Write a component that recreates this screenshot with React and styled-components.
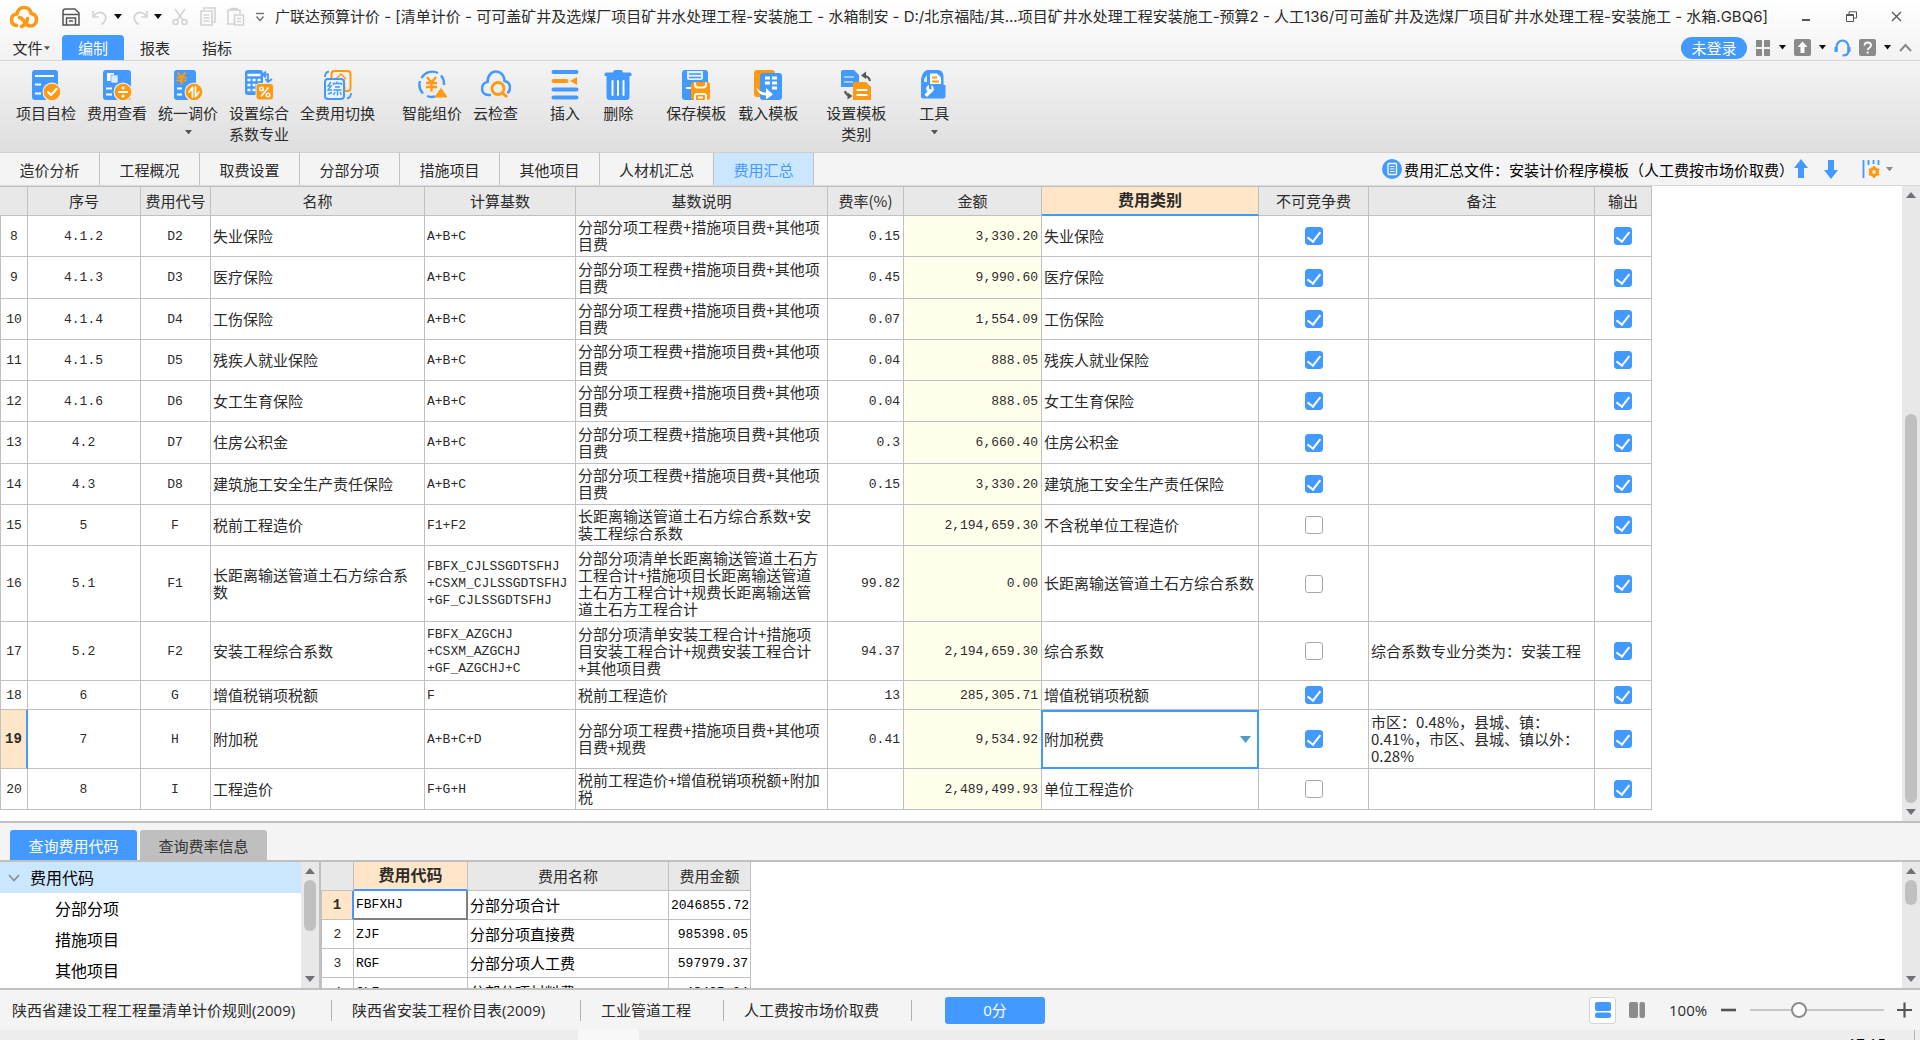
import React, { useState } from 'react';
import styled, { createGlobalStyle, css } from 'styled-components';

const BLUE = '#4299ff';
const ORANGE = '#ff9912';
const LINE = '#c0c0c0';
const SANS = '"Open Sans", "Noto Sans CJK SC", sans-serif';
const TITLE = 'Inter, "Noto Sans CJK SC", sans-serif';
const CJK = '"Noto Sans CJK SC", sans-serif';
const MONO = '"Liberation Mono", "Noto Sans CJK SC", monospace';

const GlobalStyle = createGlobalStyle`
  * { box-sizing: border-box; }
  body { margin: 0; }
  button, input, select { font: inherit; color: inherit; margin: 0; }
  button { padding: 0; border: 0; background: none; cursor: pointer; }
`;

const Window = styled.div`
  display: flex;
  flex-direction: column;
  height: 100vh;
  overflow: hidden;
  background: #f4f4f4;
  color: #2b2b2b;
  font: 15px/21px ${CJK};
`;

/* ---------- title and menu ---------- */

const WindowHead = styled.header`
  flex: none;
  background: linear-gradient(#ffffff, #f2f2f2);
`;

const TitleBar = styled.div`
  display: flex;
  align-items: center;
  height: 35px;
  padding: 0 14px 2px 8px;
`;

const QuickTools = styled.div`
  display: flex;
  align-items: center;
  margin-left: 22px;
`;

const QuickButton = styled.button`
  display: flex;
  align-items: center;
  justify-content: center;
  width: ${(p) => p.$width || 28}px;
  height: 24px;
  margin-left: ${(p) => p.$before || 0}px;
`;

const WindowTitle = styled.h1`
  flex: 1;
  min-width: 0;
  margin: 0 0 0 5px;
  overflow: hidden;
  white-space: nowrap;
  font: 400 15px/21px ${TITLE};
`;

const WindowButtons = styled.div`
  display: flex;
  gap: 25px;
  margin-left: 20px;
`;

const WindowButton = styled.button`
  display: flex;
  align-items: center;
  justify-content: center;
  width: 20px;
  height: 20px;
`;

const MenuBar = styled.div`
  display: flex;
  align-items: stretch;
  height: 26px;
  border-bottom: 1px solid #d6d6d6;
`;

const MenuItem = styled.button`
  display: flex;
  align-items: center;
  justify-content: center;
  gap: 1px;
  width: 62px;
  border-radius: 4px 4px 0 0;
  ${(p) => p.$active && css`background: ${BLUE}; color: #fff;`}
`;

const MenuTools = styled.div`
  display: flex;
  align-items: center;
  gap: 8px;
  margin-left: auto;
  padding-right: 8px;
`;

const LoginButton = styled.button`
  width: 66px;
  height: 22px;
  border-radius: 11px;
  background: ${BLUE};
  color: #fff;
  line-height: 21px;
`;

const MenuTool = styled.button`
  display: flex;
  align-items: center;
  gap: 8px;
  height: 20px;
`;

/* ---------- ribbon ---------- */

const Ribbon = styled.div`
  flex: none;
  display: flex;
  height: 92px;
  padding: 9px 16px 0;
  background: linear-gradient(#f4f4f4, #dedede);
  border-bottom: 1px solid #cfcfcf;
`;

const RibbonGroup = styled.div`
  display: flex;
  align-items: flex-start;
  gap: ${(p) => p.$gap || 11}px;
  margin-right: ${(p) => p.$after || 32}px;
`;

const RibbonButton = styled.button`
  display: flex;
  flex-direction: column;
  align-items: center;
  line-height: 21px;
  white-space: pre-line;
  svg:first-child { margin-bottom: 2px; }
`;

const CaretSlot = styled.span`
  display: flex;
  align-items: center;
  height: 20px;
`;

/* ---------- page tabs ---------- */

const PageTabs = styled.nav`
  flex: none;
  display: flex;
  align-items: stretch;
  height: 33px;
  border-bottom: 1px solid #d8d8d8;
  background: #f4f4f4;
`;

const PageTab = styled.button`
  min-width: 100px;
  padding: 0 19px;
  border-right: 1px solid ${LINE};
  ${(p) => p.$active && css`background: #cbe6ff; color: ${BLUE};`}
`;

const TemplateInfo = styled.div`
  display: flex;
  align-items: center;
  margin-left: auto;
  padding-right: 27px;
  color: #000;
`;

const TemplateName = styled.span`
  margin: 0 0 0 2px;
`;

const InfoButton = styled.button`
  display: flex;
  align-items: center;
  gap: 6px;
  margin-left: ${(p) => p.$before || 0}px;
`;

/* ---------- tables ---------- */

const SheetArea = styled.main`
  flex: 1;
  display: flex;
  min-height: 0;
  background: #fff;
  border-bottom: 2px solid ${LINE};
`;

const SheetView = styled.div`
  flex: 1;
  min-width: 0;
  overflow: hidden;
`;

const Sheet = styled.table`
  table-layout: fixed;
  border-collapse: separate;
  border-spacing: 0;
  width: ${(p) => p.$width}px;
`;

const Col = styled.col`
  width: ${(p) => p.$width}px;
`;

const HeadCell = styled.th`
  height: ${(p) => (p.$low ? 29 : 30)}px;
  padding: 0 0 2px;
  border-top: ${(p) => (p.$low ? 0 : 1)}px solid ${LINE};
  border-right: 1px solid ${LINE};
  border-bottom: 1px solid ${LINE};
  background: #e8e8e8;
  font-weight: 400;
  white-space: nowrap;
  ${(p) => p.$selected && css`
    background: #ffe6c8;
    border-bottom: 2px solid ${BLUE};
    font-size: 16px;
    font-weight: 700;
  `}
`;

const Row = styled.tr`
  height: ${(p) => p.$height}px;
`;

const Cell = styled.td`
  padding: 0 3px 2px 2px;
  border-right: 1px solid ${LINE};
  border-bottom: 1px solid ${LINE};
  text-align: ${(p) => p.$align || 'left'};
  line-height: 17px;
  white-space: pre-line;
  ${(p) => p.$code && css`padding-bottom: 0; font-family: ${MONO}; font-size: 13px;`}
  ${(p) => p.$money && css`background: #ffffeb;`}
  ${(p) => p.$tight && css`padding-left: 2px; padding-right: 2px; color: #000;`}
  ${(p) => p.$tick && css`padding: 0;`}
  ${(p) => p.$focused && css`
    border: 2px solid #808080;
    border-top-width: 0;
    border-left-width: 0;
  `}
`;

const IndexCell = styled.th`
  padding: 0;
  border-right: 1px solid ${LINE};
  border-bottom: 1px solid ${LINE};
  border-left: 1px solid ${LINE};
  font: 400 13px/17px ${MONO};
  ${(p) => p.$selected && css`
    background: #ffe6c8;
    border-right: 2px solid ${BLUE};
    font-weight: 700;
    font-size: 14px;
  `}
`;

const SelectCell = styled.td`
  padding: 0;
`;

const SelectWrap = styled.div`
  display: grid;
  grid-template: 1fr / 1fr;
  align-items: center;
  height: 59px;
  border: 2px solid ${BLUE};
  margin-left: -1px;
  svg {
    grid-area: 1 / 1;
    justify-self: end;
    margin-right: 6px;
    pointer-events: none;
  }
`;

const CategorySelect = styled.select`
  grid-area: 1 / 1;
  appearance: none;
  width: 100%;
  height: 100%;
  padding: 0 1px 2px;
  border: 0;
  outline: 0;
  background: #fff;
`;

const Check = styled.input`
  appearance: none;
  display: block;
  width: 18px;
  height: 18px;
  margin: 0 auto;
  border: 1px solid #a8a8a8;
  border-radius: 3px;
  background: #fff;
  &:checked {
    border-color: ${BLUE};
    background: ${BLUE};
  }
  &:checked::after {
    content: '';
    display: block;
    width: 6px;
    height: 11px;
    margin: 1px auto 0;
    border: solid #fff;
    border-width: 0 2px 2px 0;
    transform: rotate(38deg);
  }
`;

/* ---------- scroll bars ---------- */

const Track = styled.div`
  flex: none;
  display: flex;
  flex-direction: column;
  align-items: center;
  width: 18px;
  background: #e8e8e8;
`;

const TrackEnd = styled.button`
  display: flex;
  align-items: center;
  justify-content: center;
  width: 100%;
  height: 18px;
`;

const TrackSpace = styled.div`
  flex: ${(p) => p.$part} 1 0;
`;

const Thumb = styled.div`
  flex: ${(p) => p.$part} 1 0;
  width: 12px;
  border-radius: 6px;
  background: ${LINE};
`;

/* ---------- lower panel ---------- */

const PanelTabs = styled.div`
  flex: none;
  display: flex;
  align-items: flex-end;
  gap: 3px;
  height: 39px;
  padding-left: 10px;
  border-bottom: 2px solid ${LINE};
`;

const PanelTab = styled.button`
  width: 127px;
  height: 30px;
  border-radius: 3px 3px 0 0;
  background: ${(p) => (p.$active ? BLUE : '#bfbfbf')};
  color: ${(p) => (p.$active ? '#fff' : '#333')};
`;

const Panel = styled.section`
  flex: none;
  display: flex;
  height: 128px;
  border-bottom: 2px solid ${LINE};
  background: #fff;
`;

const Tree = styled.ul`
  width: 301px;
  margin: 0;
  padding: 0;
  list-style: none;
  color: #000;
  font-size: 16px;
`;

const TreeItem = styled.li`
  display: flex;
  align-items: center;
  gap: 10px;
  height: 31px;
  padding-left: ${(p) => (p.$child ? 55 : 8)}px;
  ${(p) => p.$selected && css`background: #cbe6ff;`}
`;

const PanelDivider = styled.div`
  width: 2px;
  background: ${LINE};
`;

/* ---------- status bar ---------- */

const StatusBar = styled.footer`
  flex: none;
  display: flex;
  align-items: center;
  height: 40px;
  padding: 0 6px 0 12px;
  font-family: ${SANS};
`;

const StatusText = styled.span`
  width: ${(p) => p.$width}px;
  margin-right: 20px;
  border-right: 1px solid #a9b2bb;
  white-space: nowrap;
`;

const ScoreButton = styled.button`
  width: 100px;
  height: 27px;
  margin-left: 13px;
  border-radius: 3px;
  background: ${BLUE};
  color: #fff;
`;

const ViewTools = styled.div`
  display: flex;
  align-items: center;
  margin-left: auto;
`;

const ViewButton = styled.button`
  display: flex;
  align-items: center;
  justify-content: center;
  width: 27px;
  height: 27px;
  margin-right: 7px;
  border: 1px solid ${(p) => (p.$active ? '#d4d4d4' : 'transparent')};
  border-radius: 3px;
  background: ${(p) => (p.$active ? '#fff' : 'transparent')};
`;

const ZoomText = styled.output`
  width: 41px;
  margin: 0 9px 0 12px;
`;

const ZoomButton = styled.button`
  display: flex;
  padding: 2px;
`;

const ZoomSlider = styled.input`
  appearance: none;
  width: 134px;
  height: 20px;
  margin: 0 11px 0 12px;
  background: transparent;
  &::-webkit-slider-runnable-track {
    height: 2px;
    background: #c6c6c6;
  }
  &::-webkit-slider-thumb {
    appearance: none;
    width: 16px;
    height: 16px;
    margin-top: -7px;
    border: 2px solid #8c8c8c;
    border-radius: 50%;
    background: #fff;
  }
`;

const TaskStrip = styled.div`
  flex: none;
  display: flex;
  height: 10px;
  overflow: hidden;
  background: #ededed;
`;

const TaskSlot = styled.div`
  width: 61px;
  margin-left: 578px;
  background: #f8f8f8;
`;

const Clock = styled.time`
  margin-left: auto;
  padding: 4px 28px 0 0;
  color: #000;
  font: 15px/18px ${SANS};
`;

const ClockEdge = styled.div`
  width: 1px;
  margin-right: 5px;
  background: #b4b4b4;
`;

/* ---------- icons ---------- */

const Caret = ({ size = 8, color = '#111' }) => (
  <svg width={size} height={size / 2 + 1} viewBox="0 0 8 5"><path d="M0 0h8L4 5z" fill={color} /></svg>
);

const Triangle = ({ up }) => (
  <svg width="10" height="6" viewBox="0 0 10 6"><path d={up ? 'M0 6h10L5 0z' : 'M0 0h10L5 6z'} fill="#6f6f76" /></svg>
);

const Logo = () => (
  <svg width="32" height="24" viewBox="0 0 32 24" fill="none" stroke={ORANGE} strokeWidth="3.6" strokeLinecap="round" strokeLinejoin="round">
    <path d="M8.500 20.500C5 20 3.500 17.500 3.500 14.500c0-3.500 2.500-5.500 5.500-5.500C9.500 5 12.500 2.500 16 2.500c4 0 6.500 2.500 7 6 3.500.5 5.500 3 5.500 6 0 4-2.800 6.500-6.300 6.500-5.200 0-6.200-8-10.700-8.500" />
    <path d="M13.500 21.500c3.500-1.500 5.500-4 6-8" />
  </svg>
);

const faint = { fill: 'none', stroke: '#d3d3d3', strokeWidth: 1.6 };
const SaveIcon = () => (
  <svg width="18" height="18" viewBox="0 0 18 18" fill="none" stroke="#555" strokeWidth="1.500">
    <path d="M1 3.500C1 2 2 1 3.500 1H13l4 4v12H1zM1 6.500h16M4.500 17v-7h9v7M7 13h4" />
  </svg>
);
const UndoIcon = () => (
  <svg width="16" height="18" viewBox="0 0 16 18" {...faint}><path d="M1 3v6h6M1.500 8.500C4 4.500 8 3.500 11 5.200c4 2.400 3.800 7.800-1.500 11.300" /></svg>
);
const RedoIcon = () => (
  <svg width="16" height="18" viewBox="0 0 16 18" {...faint}><path d="M15 3v6H9M14.500 8.500C12 4.500 8 3.500 5 5.200 1 7.600 1.200 13 6.500 16.500" /></svg>
);
const CutIcon = () => (
  <svg width="16" height="18" viewBox="0 0 16 18" {...faint}><circle cx="3.500" cy="14" r="2.500" /><circle cx="12.500" cy="14" r="2.500" /><path d="M5 12.200L13 1M11 12.200L3 1" /></svg>
);
const CopyIcon = () => (
  <svg width="16" height="19" viewBox="0 0 16 19" {...faint}><path d="M4 4V1h11v14h-3" /><path d="M1 4h11v14H1zM3.500 8h6M3.500 11h6M3.500 14h6" /></svg>
);
const PasteIcon = () => (
  <svg width="18" height="19" viewBox="0 0 18 19" {...faint}><path d="M7 17H1V3h12v4M4 4V1.500h6V4" /><path d="M7.500 8h9v10h-9zM10 11.500h4M10 14.500h4" /></svg>
);
const CustomizeIcon = () => (
  <svg width="10" height="10" viewBox="0 0 10 10"><path d="M1 1.500h8" stroke="#777" strokeWidth="1.500" /><path d="M1.500 4.500L5 8.500l3.500-4" fill="none" stroke="#777" strokeWidth="1.500" /></svg>
);

const check = { fill: 'none', stroke: '#fff', strokeWidth: 2.2, strokeLinecap: 'round', strokeLinejoin: 'round' };
const Art = ({ children }) => <svg width="30" height="30" viewBox="0 0 30 30">{children}</svg>;

const Badge = ({ children }) => (
  <>
    <circle cx="21" cy="22" r="9.500" fill="#ececec" />
    <circle cx="21" cy="22" r="8.300" fill={ORANGE} />
    {children}
  </>
);

const art = {
  selfCheck: (
    <Art>
      <rect x="1" width="26" height="30" rx="3" fill={BLUE} />
      <path d="M4 6h19M4 14.500h6M4 23.500h6" stroke="#fff" strokeWidth="2" />
      <Badge><path d="M17 22l3 3 5.500-6" {...check} /></Badge>
    </Art>
  ),
  feeView: (
    <Art>
      <rect x="1" width="28" height="30" rx="3" fill={BLUE} />
      <path d="M5 3h7v8H5z" fill="#fff" /><path d="M9 5h7v8H9z" fill="#dcebff" stroke={BLUE} strokeWidth=".6" />
      <path d="M4 18.500h6M4 24.500h6" stroke="#fff" strokeWidth="2" />
      <Badge>
        <path d="M16 22h10" stroke="#fff" strokeWidth="2" />
        <circle cx="21" cy="18" r="1.500" fill="#fff" /><circle cx="21" cy="26" r="1.500" fill="#fff" />
      </Badge>
    </Art>
  ),
  adjust: (
    <Art>
      <rect x="1" width="22" height="30" rx="3" fill={BLUE} />
      <path d="M4.500 2.500L8.500 7l4-4.500M3.500 7.500h10M3.500 10.500h10M8.500 7v7.500" fill="none" stroke={ORANGE} strokeWidth="2" />
      <path d="M4 18.500h5M4 24.500h5" stroke="#fff" strokeWidth="2" />
      <Badge><path d="M19.500 27V17.500L16 22M22.500 17v9.500L26 22" {...check} strokeWidth="1.800" /></Badge>
    </Art>
  ),
  coefficient: (
    <Art>
      <rect x="1" width="18" height="25" rx="3" fill={BLUE} />
      <path d="M3.500 5h13M3.500 10h3M8.500 10h3M13.500 10h3M3.500 15h3M8.500 15h3M3.500 20h3M8.500 20h3" stroke="#fff" strokeWidth="2.600" />
      <path d="M19.500 4.500h4.500v7M22 1.500l-3 3 3 3M21.500 9l2.500 3 4-3" fill="none" stroke={BLUE} strokeWidth="1.800" />
      <rect x="12" y="13.500" width="17.500" height="16.500" rx="3" fill={ORANGE} stroke="#e9e9e9" />
      <circle cx="17.500" cy="19" r="1.800" fill="none" stroke="#fff" strokeWidth="1.400" /><circle cx="24" cy="25" r="1.800" fill="none" stroke="#fff" strokeWidth="1.400" /><path d="M24.500 17.500l-7.500 9" stroke="#fff" strokeWidth="1.800" />
    </Art>
  ),
  swap: (
    <Art>
      <rect x="8.500" y="1" width="19" height="20" rx="3" fill="#f3f0ea" stroke={ORANGE} strokeWidth="2" />
      <path d="M13 9l5-5 5 5M14 10h8M18 10v6M14.500 14h8M13 18h10" fill="none" stroke={ORANGE} strokeWidth="1.500" />
      <rect x="2" y="9" width="19" height="20" rx="3" fill="#eaf3ff" stroke={BLUE} strokeWidth="2" />
      <path d="M8 12l-3 4h3l-3 4h4M5 24l4-1.500M14 11.500v2M10.500 15v-1.500h8V15M12 17h5M10.500 20h8M14.500 20v5.500M12 22l-1.500 3M17 22l1.500 3" fill="none" stroke={BLUE} strokeWidth="1.400" />
      <path d="M2 7c0-3 1-5 4-5.500M28 23c0 3-1 5-4 5.500" fill="none" stroke={BLUE} strokeWidth="1.800" />
    </Art>
  ),
  smart: (
    <Art>
      <path d="M18 26.500A12.500 12.500 0 0 1 10 26M6 23.500A13 13 0 0 1 3 11M4.500 8A12.500 12.500 0 0 1 21 3M24 5.500A13 13 0 0 1 27 15" fill="none" stroke={BLUE} strokeWidth="2.400" />
      <path d="M10 7l4.500 5.500L19 7M9 13h11M9 17h11M14.500 12v9.500" fill="none" stroke={ORANGE} strokeWidth="2.400" />
      <path d="M24 18.500L30 27H18z" fill={ORANGE} stroke={ORANGE} strokeLinejoin="round" />
    </Art>
  ),
  cloud: (
    <Art>
      <path d="M10 25H7.500C3.500 25 1 22 1 18.500c0-3.500 2.500-6 5.500-6.500C6.500 5.500 10.500 1.500 15 1.500s8.500 4 8.500 9.500c3.500.7 5.500 3.500 5.500 6.500 0 2.500-1 4.500-2.500 5.700" fill="none" stroke={BLUE} strokeWidth="2.600" />
      <circle cx="17" cy="18.500" r="6" fill="none" stroke={ORANGE} strokeWidth="2.800" />
      <path d="M21.500 23l4.500 4" stroke={ORANGE} strokeWidth="3" />
    </Art>
  ),
  insert: (
    <Art>
      <path d="M3.500 2h23M3.500 19.500h23M3.500 27.500h23" stroke={BLUE} strokeWidth="4" strokeLinecap="round" />
      <path d="M3.500 11h13" stroke={ORANGE} strokeWidth="4" strokeLinecap="round" /><path d="M20 11l7-4v8z" fill={ORANGE} />
    </Art>
  ),
  trash: (
    <Art>
      <path d="M10 2.500Q10 0 12 0h6q2 0 2 2.500h7q1.500 0 1.500 1.500v2h-27V4q0-1.500 1.500-1.500zM3.500 6h23V27q0 3-3 3h-17q-3 0-3-3z" fill={BLUE} />
      <path d="M9.500 11v14M15 11v14M20.500 11v14" stroke="#fff" strokeWidth="2" strokeLinecap="round" />
    </Art>
  ),
  saveTemplate: (
    <Art>
      <rect x="1" width="26" height="30" rx="3" fill={BLUE} />
      <path d="M6 1h16v7q0 2-2 2H8q-2 0-2-2z" fill="#e4f0ff" /><path d="M8 4h12M8 7.500h12" stroke={BLUE} strokeWidth="1.600" />
      <rect x="5" y="17" width="5" height="2" fill="#fff" />
      <rect x="10" y="12" width="19" height="18" rx="3" fill={ORANGE} />
      <path d="M14 12.500v2q0 3 3 3h5q3 0 3-3v-2M14 30v-4q0-2 2-2h7q2 0 2 2v4M17 27.500h5" fill="none" stroke="#fff" strokeWidth="2" />
    </Art>
  ),
  loadTemplate: (
    <Art>
      <rect x="1" width="21" height="27" rx="3" fill={ORANGE} />
      <rect x="7" y="3" width="22" height="27" rx="3" fill={BLUE} />
      <path d="M12 8h5M19 8h5M12 13h5M19 13h5M19 18h5" stroke="#fff" strokeWidth="3" />
      <path d="M3.500 17c2 4 5.500 5.500 9.500 5.500V18l7 6.500-7 5v-4C8 25.500 4 22.500 3.500 17z" fill="#fff" />
    </Art>
  ),
  templateKind: (
    <Art>
      <path d="M2 0h11l5 5v12H0V2q0-2 2-2z" fill={BLUE} /><path d="M3 7h10M3 12h9" stroke="#9fcbff" strokeWidth="2" />
      <path d="M14 12h11l5 5v13H12V14q0-2 2-2z" fill={ORANGE} /><path d="M15.500 20h11M15.500 25h11" stroke="#fff" strokeWidth="2" />
      <path d="M24 6c2.500.5 4.500 2 5 5M4 21c.3 2 1.500 3.500 3.500 4.500" fill="none" stroke="#555" strokeWidth="2" />
      <path d="M25 1.500L20 5.500l5 3.500zM6.500 22.500l5 3.500-5 3.500z" fill="#555" />
    </Art>
  ),
  tools: (
    <Art>
      <path d="M4 28.500q-2 0-2-2V12C2 5 5 0 9 0h10q5 0 5.500 6v9h2v11.500q0 2-2 2z" fill={BLUE} />
      <path d="M11 3.500h7l4 4V14H11z" fill="#fff" /><path d="M13 7.500h5M13 11.500h7" stroke={ORANGE} strokeWidth="2" />
      <path d="M5 12V9l3-4v7z" fill="#dcebff" />
      <path d="M10 15v4l2.500.5v-4.500c3 2 3 6 0 7.500L8 27 5.500 24.500l3-3C6 18.500 7.500 16 10 15z" fill="#fff" />
    </Art>
  ),
};

/* ---------- data ---------- */

const ribbon = [
  { after: 27, items: [['selfCheck', '项目自检'], ['feeView', '费用查看'], ['adjust', '统一调价', true], ['coefficient', '设置综合\n系数专业'], ['swap', '全费用切换']] },
  { after: 32, items: [['smart', '智能组价'], ['cloud', '云检查']] },
  { after: 33, gap: 23, items: [['insert', '插入'], ['trash', '删除']] },
  { after: 28, gap: 12, items: [['saveTemplate', '保存模板'], ['loadTemplate', '载入模板']] },
  { after: 33, items: [['templateKind', '设置模板\n类别']] },
  { after: 32, items: [['tools', '工具', true]] },
];

const pages = ['造价分析', '工程概况', '取费设置', '分部分项', '措施项目', '其他项目', '人材机汇总', '费用汇总'];

const base = '分部分项工程费+措施项目费+其他项目费';
const rows = [
  { n: 8, h: 41, seq: '4.1.2', code: 'D2', name: '失业保险', calc: 'A+B+C', note: base, rate: '0.15', sum: '3,330.20', kind: '失业保险', fixed: true },
  { n: 9, h: 42, seq: '4.1.3', code: 'D3', name: '医疗保险', calc: 'A+B+C', note: base, rate: '0.45', sum: '9,990.60', kind: '医疗保险', fixed: true },
  { n: 10, h: 41, seq: '4.1.4', code: 'D4', name: '工伤保险', calc: 'A+B+C', note: base, rate: '0.07', sum: '1,554.09', kind: '工伤保险', fixed: true },
  { n: 11, h: 41, seq: '4.1.5', code: 'D5', name: '残疾人就业保险', calc: 'A+B+C', note: base, rate: '0.04', sum: '888.05', kind: '残疾人就业保险', fixed: true },
  { n: 12, h: 41, seq: '4.1.6', code: 'D6', name: '女工生育保险', calc: 'A+B+C', note: base, rate: '0.04', sum: '888.05', kind: '女工生育保险', fixed: true },
  { n: 13, h: 42, seq: '4.2', code: 'D7', name: '住房公积金', calc: 'A+B+C', note: base, rate: '0.3', sum: '6,660.40', kind: '住房公积金', fixed: true },
  { n: 14, h: 41, seq: '4.3', code: 'D8', name: '建筑施工安全生产责任保险', calc: 'A+B+C', note: base, rate: '0.15', sum: '3,330.20', kind: '建筑施工安全生产责任保险', fixed: true },
  { n: 15, h: 41, seq: '5', code: 'F', name: '税前工程造价', calc: 'F1+F2', note: '长距离输送管道土石方综合系数+安装工程综合系数', rate: '', sum: '2,194,659.30', kind: '不含税单位工程造价' },
  { n: 16, h: 76, seq: '5.1', code: 'F1', name: '长距离输送管道土石方综合系数', calc: 'FBFX_CJLSSGDTSFHJ\n+CSXM_CJLSSGDTSFHJ\n+GF_CJLSSGDTSFHJ', note: '分部分项清单长距离输送管道土石方工程合计+措施项目长距离输送管道土石方工程合计+规费长距离输送管道土石方工程合计', rate: '99.82', sum: '0.00', kind: '长距离输送管道土石方综合系数' },
  { n: 17, h: 59, seq: '5.2', code: 'F2', name: '安装工程综合系数', calc: 'FBFX_AZGCHJ\n+CSXM_AZGCHJ\n+GF_AZGCHJ+C', note: '分部分项清单安装工程合计+措施项目安装工程合计+规费安装工程合计\n+其他项目费', rate: '94.37', sum: '2,194,659.30', kind: '综合系数', remark: '综合系数专业分类为：安装工程' },
  { n: 18, h: 29, seq: '6', code: 'G', name: '增值税销项税额', calc: 'F', note: '税前工程造价', rate: '13', sum: '285,305.71', kind: '增值税销项税额', fixed: true },
  { n: 19, h: 59, seq: '7', code: 'H', name: '附加税', calc: 'A+B+C+D', note: '分部分项工程费+措施项目费+其他项目费+规费', rate: '0.41', sum: '9,534.92', kind: '附加税费', fixed: true, editing: true, remark: '市区：0.48%，县城、镇：\n0.41%，市区、县城、镇以外：\n0.28%' },
  { n: 20, h: 41, seq: '8', code: 'I', name: '工程造价', calc: 'F+G+H', note: '税前工程造价+增值税销项税额+附加税', rate: '', sum: '2,489,499.93', kind: '单位工程造价' },
];

const columns = [28, 113, 70, 214, 151, 252, 76, 138, 217, 110, 226, 57];
const headings = ['', '序号', '费用代号', '名称', '计算基数', '基数说明', '费率(%)', '金额', '费用类别', '不可竞争费', '备注', '输出'];

const codeRows = [
  ['FBFXHJ', '分部分项合计', '2046855.72'],
  ['ZJF', '分部分项直接费', '985398.05'],
  ['RGF', '分部分项人工费', '597979.37'],
  ['CLF', '分部分项材料费', '48425.34'],
];

const ScrollBar = ({ before, size, after }) => (
  <Track>
    <TrackEnd aria-label="向上滚动"><Triangle up /></TrackEnd>
    <TrackSpace $part={before} />
    <Thumb $part={size} />
    <TrackSpace $part={after} />
    <TrackEnd aria-label="向下滚动"><Triangle /></TrackEnd>
  </Track>
);

const FeeRow = ({ row }) => (
  <Row $height={row.h}>
    <IndexCell scope="row" $selected={row.editing}>{row.n}</IndexCell>
    <Cell $code $align="center">{row.seq}</Cell>
    <Cell $code $align="center">{row.code}</Cell>
    <Cell>{row.name}</Cell>
    <Cell $code>{row.calc}</Cell>
    <Cell>{row.note}</Cell>
    <Cell $code $align="right">{row.rate}</Cell>
    <Cell $code $money $align="right">{row.sum}</Cell>
    {row.editing ? (
      <SelectCell>
        <SelectWrap>
          <CategorySelect aria-label="费用类别" defaultValue={row.kind}>
            <option>{row.kind}</option>
          </CategorySelect>
          <svg width="11" height="7" viewBox="0 0 11 7"><path d="M0 0h11L5.500 7z" fill="#4a9cc9" /></svg>
        </SelectWrap>
      </SelectCell>
    ) : (
      <Cell>{row.kind}</Cell>
    )}
    <Cell $tick><Check type="checkbox" aria-label={`不可竞争费 ${row.n}`} defaultChecked={row.fixed} /></Cell>
    <Cell>{row.remark}</Cell>
    <Cell $tick><Check type="checkbox" aria-label={`输出 ${row.n}`} defaultChecked /></Cell>
  </Row>
);

export default function App() {
  const [zoom, setZoom] = useState(100);
  return (
    <Window>
      <GlobalStyle />
      <WindowHead>
        <TitleBar>
          <Logo />
          <QuickTools>
            <QuickButton $width={18} aria-label="保存"><SaveIcon /></QuickButton>
            <QuickButton $before={6} aria-label="撤销"><UndoIcon /></QuickButton>
            <QuickButton $width={8} aria-label="撤销列表"><Caret /></QuickButton>
            <QuickButton $before={4} aria-label="恢复"><RedoIcon /></QuickButton>
            <QuickButton $width={8} aria-label="恢复列表"><Caret /></QuickButton>
            <QuickButton $before={4} aria-label="剪切"><CutIcon /></QuickButton>
            <QuickButton aria-label="复制"><CopyIcon /></QuickButton>
            <QuickButton aria-label="粘贴"><PasteIcon /></QuickButton>
            <QuickButton $width={20} aria-label="自定义"><CustomizeIcon /></QuickButton>
          </QuickTools>
          <WindowTitle>广联达预算计价 - [清单计价 - 可可盖矿井及选煤厂项目矿井水处理工程-安装施工 - 水箱制安 - D:/北京福陆/其...项目矿井水处理工程安装施工-预算2 - 人工136/可可盖矿井及选煤厂项目矿井水处理工程-安装施工 - 水箱.GBQ6]</WindowTitle>
          <WindowButtons>
            <WindowButton aria-label="最小化"><svg width="8" height="12" viewBox="0 0 8 12"><path d="M0 9h8" stroke="#555" strokeWidth="2" /></svg></WindowButton>
            <WindowButton aria-label="还原"><svg width="11" height="11" viewBox="0 0 11 11" fill="none" stroke="#555"><path d="M3 3V.8h7.500V7H8M.5 3.500h7v7h-7zM.5 4.500h7" /></svg></WindowButton>
            <WindowButton aria-label="关闭"><svg width="11" height="11" viewBox="0 0 11 11"><path d="M1 1l9 9M10 1l-9 9" stroke="#555" strokeWidth="1.300" /></svg></WindowButton>
          </WindowButtons>
        </TitleBar>
        <MenuBar>
          <MenuItem>文件<Caret size={6} color="#555" /></MenuItem>
          <MenuItem $active>编制</MenuItem>
          <MenuItem>报表</MenuItem>
          <MenuItem>指标</MenuItem>
          <MenuTools>
            <LoginButton>未登录</LoginButton>
            <MenuTool aria-label="窗口布局"><svg width="16" height="16" viewBox="0 0 16 16" fill="#8a8a8a"><path d="M1 0h6v7H1zM9 0h6v7H9zM1 9h6v7H1zM9 9h6v7H9z" /></svg><Caret size={7} /></MenuTool>
            <MenuTool aria-label="上传"><svg width="17" height="17" viewBox="0 0 17 17"><rect width="17" height="17" rx="2" fill="#8a8a8a" /><path d="M8.500 2.500l5 5.500h-3v6h-4V8h-3z" fill="#fff" /></svg><Caret size={7} /></MenuTool>
            <MenuTool aria-label="客服"><svg width="17" height="18" viewBox="0 0 17 18" fill="none" stroke={BLUE} strokeWidth="2.200"><path d="M2.500 12V8a6 6.500 0 0 1 12 0v4c0 3-2 4.500-6 4.500" /><path d="M2 8v5M15 8v5" strokeWidth="3" /></svg></MenuTool>
            <MenuTool aria-label="帮助"><svg width="17" height="17" viewBox="0 0 17 17"><rect width="17" height="17" rx="2" fill="#8a8a8a" /><path d="M5.500 6.500c0-4 6.500-4 6.500 0 0 2.300-3.300 2-3.300 4.500M8.700 12.500v2" fill="none" stroke="#fff" strokeWidth="1.800" /></svg><Caret size={7} /></MenuTool>
            <MenuTool aria-label="收起功能区"><svg width="13" height="9" viewBox="0 0 13 9"><path d="M1 8l5.500-6L12 8" fill="none" stroke="#888" strokeWidth="2" /></svg></MenuTool>
          </MenuTools>
        </MenuBar>
      </WindowHead>

      <Ribbon>
        {ribbon.map((group, i) => (
          <RibbonGroup key={i} $gap={group.gap} $after={group.after}>
            {group.items.map(([icon, label, menu]) => (
              <RibbonButton key={label}>
                {art[icon]}
                {label}
                {menu && <CaretSlot><Caret size={7} color="#555" /></CaretSlot>}
              </RibbonButton>
            ))}
          </RibbonGroup>
        ))}
      </Ribbon>

      <PageTabs>
        {pages.map((page) => <PageTab key={page} $active={page === '费用汇总'}>{page}</PageTab>)}
        <TemplateInfo>
          <svg width="20" height="20" viewBox="0 0 20 20"><circle cx="10" cy="10" r="10" fill={BLUE} /><rect x="6" y="4.500" width="8.500" height="11" rx="1" fill="none" stroke="#fff" strokeWidth="1.300" /><path d="M8 7.500h4.500M8 10h4.500M8 12.500h4.500" stroke="#fff" /></svg>
          <TemplateName>费用汇总文件：安装计价程序模板（人工费按市场价取费）</TemplateName>
          <InfoButton aria-label="上移"><svg width="14" height="20" viewBox="0 0 14 20"><path d="M7 0l7 9h-4v10H4V9H0z" fill={BLUE} /></svg></InfoButton>
          <InfoButton $before={16} aria-label="下移"><svg width="14" height="20" viewBox="0 0 14 20"><path d="M7 20l7-9h-4V1H4v10H0z" fill={BLUE} /></svg></InfoButton>
          <InfoButton $before={24} aria-label="列设置">
            <svg width="18" height="20" viewBox="0 0 18 20"><path d="M1.500 1v18M6.500 1v5M11.500 1v4M16.500 1v5" stroke={BLUE} strokeWidth="1.800" /><circle cx="12" cy="13" r="3.600" fill="none" stroke={ORANGE} strokeWidth="3" /><path d="M12 7v12M6.800 10l10.400 6M6.800 16l10.400-6" stroke={ORANGE} strokeWidth="2" /><circle cx="12" cy="13" r="1.800" fill="#f4f4f4" /></svg>
            <Caret size={7} color="#8a8a8a" />
          </InfoButton>
        </TemplateInfo>
      </PageTabs>

      <SheetArea>
        <SheetView>
          <Sheet $width={1652}>
            <colgroup>{columns.map((w, i) => <Col key={i} $width={w} />)}</colgroup>
            <thead>
              <tr>{headings.map((h, i) => <HeadCell key={i} scope="col" $selected={h === '费用类别'}>{h}</HeadCell>)}</tr>
            </thead>
            <tbody>{rows.map((row) => <FeeRow key={row.n} row={row} />)}</tbody>
          </Sheet>
        </SheetView>
        <ScrollBar before={210} size={389} after={0} />
      </SheetArea>

      <PanelTabs>
        <PanelTab $active>查询费用代码</PanelTab>
        <PanelTab>查询费率信息</PanelTab>
      </PanelTabs>
      <Panel>
        <Tree>
          <TreeItem $selected>
            <svg width="12" height="8" viewBox="0 0 12 8"><path d="M1 1l5 5.500L11 1" fill="none" stroke="#8a9099" strokeWidth="1.800" /></svg>
            费用代码
          </TreeItem>
          <TreeItem $child>分部分项</TreeItem>
          <TreeItem $child>措施项目</TreeItem>
          <TreeItem $child>其他项目</TreeItem>
        </Tree>
        <ScrollBar before={0} size={51} after={39} />
        <PanelDivider />
        <SheetView>
          <Sheet $width={430}>
            <colgroup>
              <Col $width={33} /><Col $width={114} /><Col $width={201} /><Col $width={82} />
            </colgroup>
            <thead>
              <tr>
                <HeadCell $low />
                <HeadCell $low scope="col" $selected>费用代码</HeadCell>
                <HeadCell $low scope="col">费用名称</HeadCell>
                <HeadCell $low scope="col">费用金额</HeadCell>
              </tr>
            </thead>
            <tbody>
              {codeRows.map(([code, name, sum], i) => (
                <Row key={code} $height={29}>
                  <IndexCell scope="row" $selected={i === 0}>{i + 1}</IndexCell>
                  <Cell $code $tight $focused={i === 0}>{code}</Cell>
                  <Cell $tight>{name}</Cell>
                  <Cell $code $tight $align="right">{sum}</Cell>
                </Row>
              ))}
            </tbody>
          </Sheet>
        </SheetView>
        <ScrollBar before={0} size={25} after={65} />
      </Panel>

      <StatusBar>
        <StatusText $width={320}>陕西省建设工程工程量清单计价规则(2009)</StatusText>
        <StatusText $width={229}>陕西省安装工程价目表(2009)</StatusText>
        <StatusText $width={123}>工业管道工程</StatusText>
        <StatusText $width={168}>人工费按市场价取费</StatusText>
        <ScoreButton>0分</ScoreButton>
        <ViewTools>
          <ViewButton $active aria-label="上下布局"><svg width="16" height="16" viewBox="0 0 16 16" fill={BLUE}><rect width="16" height="9" rx="2" /><rect y="10.500" width="16" height="5.500" rx="2" /></svg></ViewButton>
          <ViewButton aria-label="左右布局"><svg width="16" height="16" viewBox="0 0 16 16" fill="#8c8c8c"><rect width="9" height="16" rx="2" /><rect x="10.500" width="5.500" height="16" rx="2" /></svg></ViewButton>
          <ZoomText>{zoom}%</ZoomText>
          <ZoomButton aria-label="缩小" onClick={() => setZoom(zoom - 10)}><svg width="15" height="16" viewBox="0 0 15 16"><path d="M0 8h15" stroke="#555" strokeWidth="2.600" /></svg></ZoomButton>
          <ZoomSlider type="range" aria-label="缩放比例" min="47" max="200" value={zoom} onChange={(e) => setZoom(+e.target.value)} />
          <ZoomButton aria-label="放大" onClick={() => setZoom(zoom + 10)}><svg width="15" height="16" viewBox="0 0 15 16"><path d="M0 8h15M7.500 .5v15" stroke="#555" strokeWidth="2.200" /></svg></ZoomButton>
        </ViewTools>
      </StatusBar>
      <TaskStrip>
        <TaskSlot />
        <Clock>17:15</Clock>
        <ClockEdge />
      </TaskStrip>
    </Window>
  );
}
